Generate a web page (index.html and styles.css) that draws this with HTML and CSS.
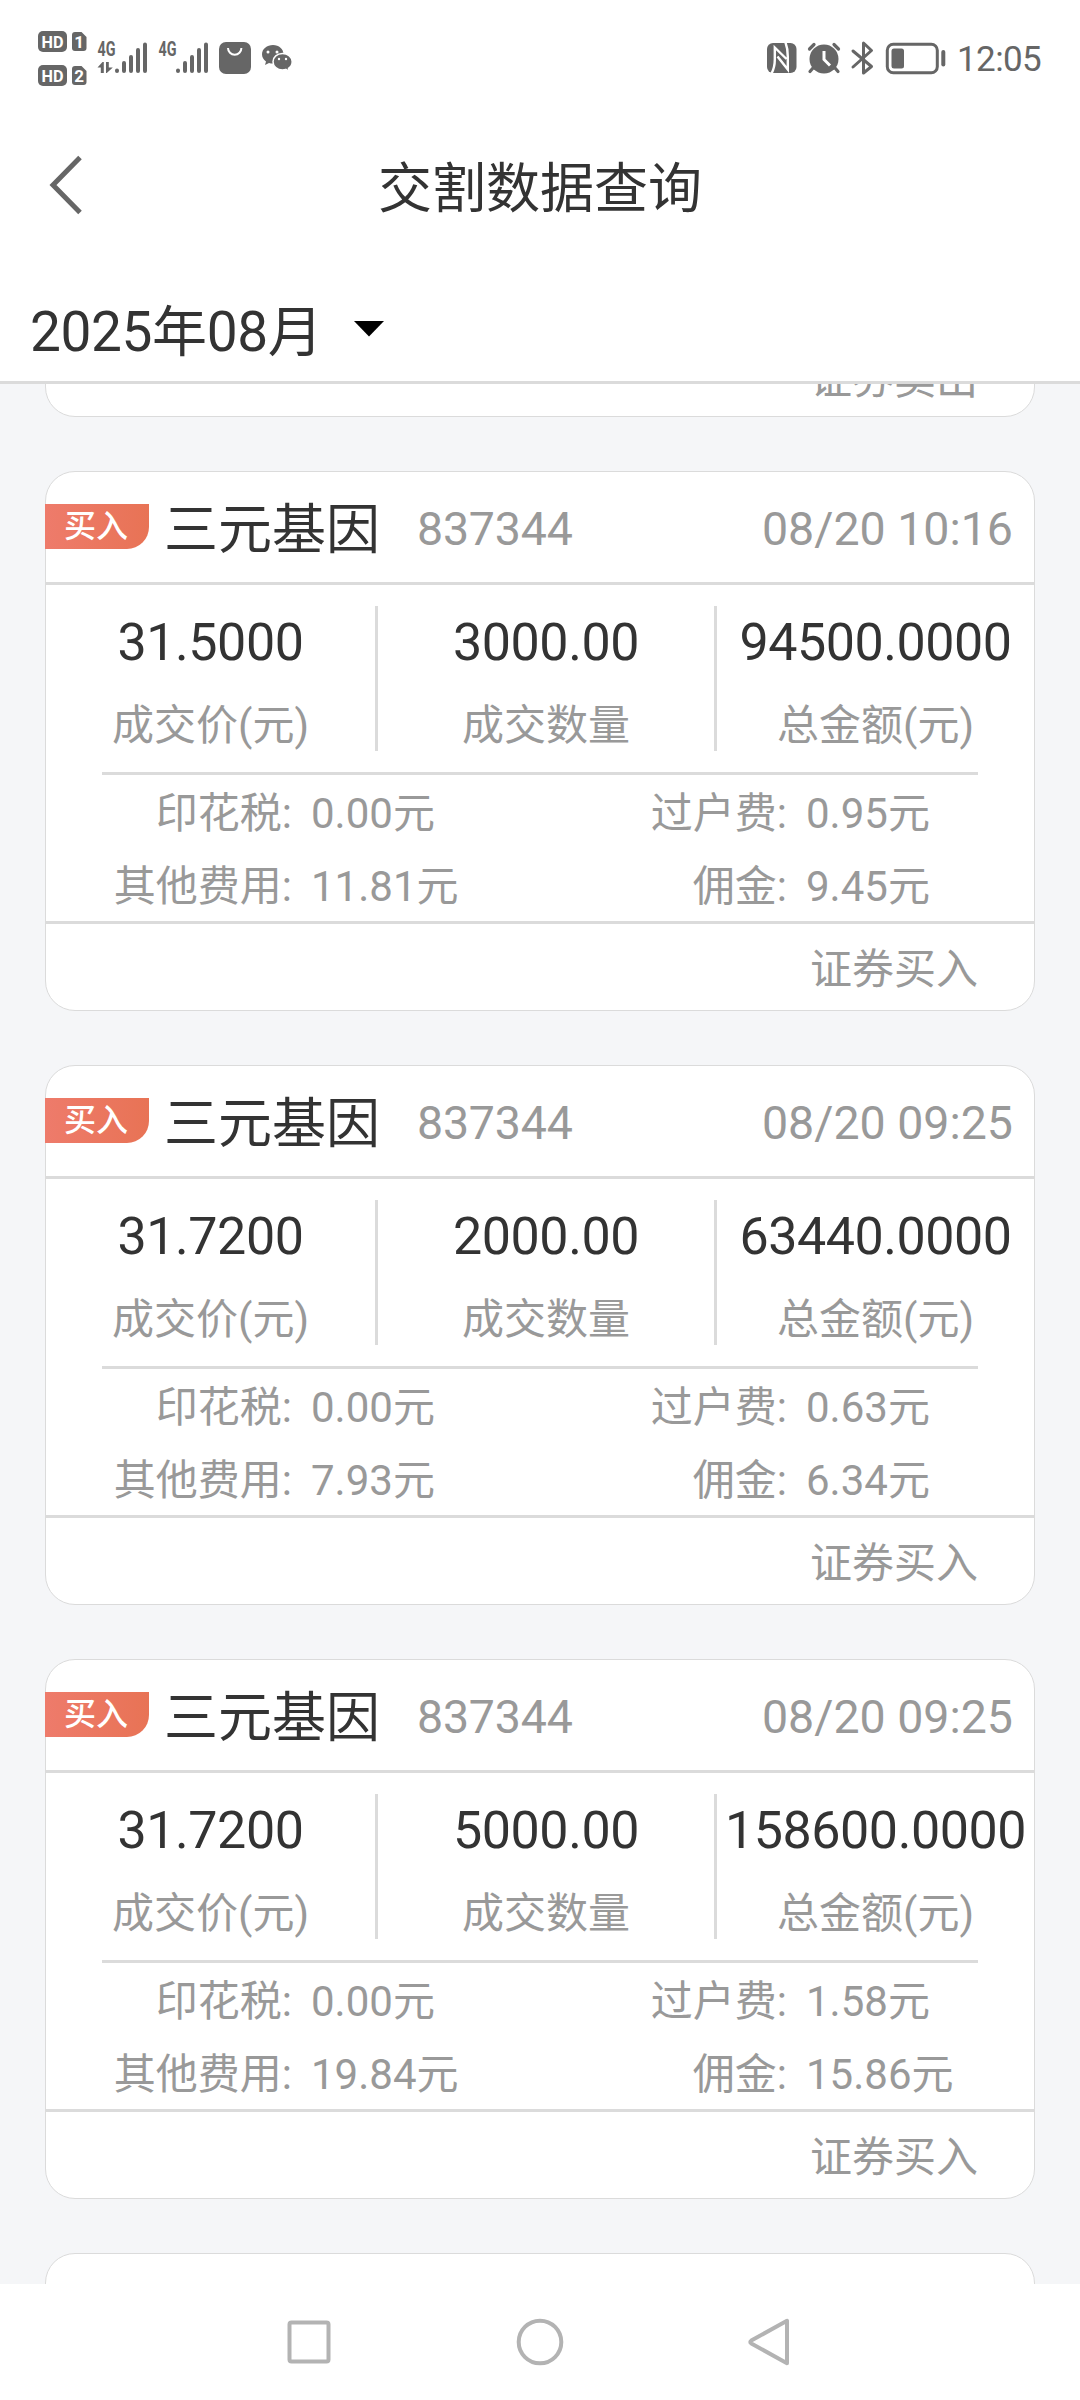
FILE: index.html
```html
<!DOCTYPE html>
<html lang="zh-CN">
<head>
<meta charset="utf-8">
<title>交割数据查询</title>
<link rel="stylesheet" href="styles.css">
</head>
<body>
<div class="screen">
  <div class="status">
    <svg class="status-left" width="260" height="60" viewBox="30 24 260 60" fill="#666">
      <rect x="38" y="31" width="29" height="21" rx="5"/>
      <rect x="38" y="65" width="29" height="21" rx="5"/>
      <path d="M72 35q0-3 3-3h6.500l5 5v11q0 3-3 3h-8.500q-3 0-3-3z"/>
      <path d="M72 69q0-3 3-3h6.500l5 5v11q0 3-3 3h-8.500q-3 0-3-3z"/>
      <g class="chip">
        <text x="41.500" y="47.700" textLength="22" lengthAdjust="spacingAndGlyphs">HD</text>
        <text x="41.500" y="81.700" textLength="22" lengthAdjust="spacingAndGlyphs">HD</text>
        <text x="74.300" y="47.700">1</text>
        <text x="74.300" y="81.700">2</text>
      </g>
      <g class="net">
        <text x="97.500" y="56" textLength="18" lengthAdjust="spacingAndGlyphs">4G</text>
        <text x="158.500" y="56" textLength="18" lengthAdjust="spacingAndGlyphs">4G</text>
      </g>
      <path d="M97.500 67.500l5-5.500h1.300v11h-3v-5.500zM106 62h2.800v5.500h4L106.800 73H106z"/>
      <g stroke="#666" stroke-width="4" stroke-linecap="round">
        <path d="M117 70.500v.500M124 63v8M131 57v14M138 50v21M145 44.500v26.500"/>
        <path d="M178 70.500v.500M185 63v8M192 57v14M199 50v21M206 44.500v26.500"/>
      </g>
      <rect x="219" y="42" width="32" height="32" rx="7"/>
      <path d="M228 48a6.700 6.700 0 0 0 13.400 0" fill="none" stroke="#fff" stroke-width="2"/>
      <path d="M273 45c-6 0-11 4-11 9.300 0 3 1.500 5.500 4 7.200l-1 3.500 4-2c1.300.4 2.600.6 4 .6 6 0 10.500-4 10.500-9.300S279 45 273 45z"/>
      <path d="M282.500 53.500c-5.400 0-9.500 3.600-9.500 8.200s4.100 8.200 9.500 8.200c1.200 0 2.300-.2 3.300-.5l3.700 2-1-3c2.300-1.600 3.700-4 3.700-6.700 0-4.600-4.300-8.200-9.700-8.200z" stroke="#fff" stroke-width="1.500"/>
      <g fill="#fff"><circle cx="268" cy="52" r="1.500"/><circle cx="277" cy="52" r="1.500"/><circle cx="279" cy="59" r="1.200"/><circle cx="286" cy="59" r="1.200"/></g>
    </svg>
    <div class="status-right">
      <svg width="182" height="40" viewBox="764 38 182 40" fill="#666">
        <rect x="767" y="43" width="29.500" height="30" rx="6"/>
        <path d="M771.500 73.500q3.300-6 3.300-14V47.500L786.500 59M785.500 42.500q2.300 6 2.300 14V69.500L777.500 56.500" fill="none" stroke="#fff" stroke-width="2.400"/>
        <circle cx="824" cy="59" r="14.500"/>
        <path d="M824 51v8.500l6 6" fill="none" stroke="#fff" stroke-width="3"/>
        <path d="M809.500 49l4.500-4.500M838.500 49l-4.500-4.500M813 68l-3 3.500M835 68l3 3.500" fill="none" stroke="#666" stroke-width="3.200" stroke-linecap="round"/>
        <path d="M853 51l18.500 15.500-8 6.500V43l8 7.500L853 67" fill="none" stroke="#666" stroke-width="3" stroke-linecap="round" stroke-linejoin="round"/>
        <rect x="887.300" y="44.300" width="50" height="28.500" rx="6" fill="none" stroke="#666" stroke-width="3"/>
        <rect x="891.500" y="48.500" width="12.500" height="20" rx="2.500"/>
        <rect x="941.300" y="50" width="4" height="16.500" rx="2"/>
      </svg>
      <span class="clock">12:05</span>
    </div>
  </div>
  <header class="topbar">
    <svg class="back" width="40" height="64" viewBox="0 0 40 64"><path d="M35 4.500L8 32l27 27.500" fill="none" stroke="#666" stroke-width="5"/></svg>
    <h1 class="title">交割数据查询</h1>
  </header>
  <div class="filter">
    <span class="month">2025年08月</span>
    <svg width="30" height="16" viewBox="0 0 30 16"><path d="M0 0h30L15 15.500z"/></svg>
  </div>
  <main class="list">
    <article class="card card-prev"><footer class="kind">证券卖出</footer></article>

    <article class="card">
      <div class="head"><span class="badge">买入</span><span class="name">三元基因</span><span class="code">837344</span><span class="time">08/20 10:16</span></div>
      <div class="stats">
        <div class="stat"><b>31.5000</b><span>成交价(元)</span></div>
        <div class="stat"><b>3000.00</b><span>成交数量</span></div>
        <div class="stat"><b>94500.0000</b><span>总金额(元)</span></div>
      </div>
      <div class="fees">
        <span class="label">印花税:</span><span class="fee">0.00元</span><span class="label">过户费:</span><span class="fee">0.95元</span>
        <span class="label">其他费用:</span><span class="fee">11.81元</span><span class="label">佣金:</span><span class="fee">9.45元</span>
      </div>
      <footer class="kind">证券买入</footer>
    </article>

    <article class="card">
      <div class="head"><span class="badge">买入</span><span class="name">三元基因</span><span class="code">837344</span><span class="time">08/20 09:25</span></div>
      <div class="stats">
        <div class="stat"><b>31.7200</b><span>成交价(元)</span></div>
        <div class="stat"><b>2000.00</b><span>成交数量</span></div>
        <div class="stat"><b>63440.0000</b><span>总金额(元)</span></div>
      </div>
      <div class="fees">
        <span class="label">印花税:</span><span class="fee">0.00元</span><span class="label">过户费:</span><span class="fee">0.63元</span>
        <span class="label">其他费用:</span><span class="fee">7.93元</span><span class="label">佣金:</span><span class="fee">6.34元</span>
      </div>
      <footer class="kind">证券买入</footer>
    </article>

    <article class="card">
      <div class="head"><span class="badge">买入</span><span class="name">三元基因</span><span class="code">837344</span><span class="time">08/20 09:25</span></div>
      <div class="stats">
        <div class="stat"><b>31.7200</b><span>成交价(元)</span></div>
        <div class="stat"><b>5000.00</b><span>成交数量</span></div>
        <div class="stat"><b>158600.0000</b><span>总金额(元)</span></div>
      </div>
      <div class="fees">
        <span class="label">印花税:</span><span class="fee">0.00元</span><span class="label">过户费:</span><span class="fee">1.58元</span>
        <span class="label">其他费用:</span><span class="fee">19.84元</span><span class="label">佣金:</span><span class="fee">15.86元</span>
      </div>
      <footer class="kind">证券买入</footer>
    </article>

    <article class="card"></article>
  </main>
  <nav class="navbar">
    <svg width="50" height="50" viewBox="0 0 50 50"><rect x="5.500" y="5.500" width="39" height="39" rx="2"/></svg>
    <svg width="50" height="50" viewBox="0 0 50 50"><circle cx="25" cy="25" r="21.300"/></svg>
    <svg width="50" height="50" viewBox="0 0 50 50"><path d="M41 3.800v42.400L5.300 26.500q-2-1.500 0-3z" stroke-linejoin="round"/></svg>
  </nav>
</div>
</body>
</html>
```
FILE: styles.css
```css
* { box-sizing: border-box; }
body {
  margin: 0;
  background: #fff;
  color: #333;
  font-family: Roboto, "Noto Sans CJK SC", sans-serif;
}
.screen {
  width: 1080px;
  height: 2400px;
  display: flex;
  flex-direction: column;
  overflow: hidden;
}
.status {
  height: 117px;
  flex: none;
  display: flex;
  justify-content: space-between;
  align-items: flex-start;
  padding: 24px 38px 0 30px;
}
.status-left { overflow: visible; }
.status-right {
  display: flex;
  align-items: center;
  gap: 11px;
  padding-top: 14px;
  height: 54px;
}
.clock {
  width: 85px;
  padding-top: 4px;
  font-size: 35px;
  line-height: 40px;
  letter-spacing: -0.6px;
  color: #666;
  white-space: nowrap;
}
.chip text { font-size: 17px; font-weight: 700; fill: #fff; }
.net text { font-size: 20px; font-weight: 700; }

.topbar {
  height: 140px;
  flex: none;
  display: grid;
  grid-template-columns: 120px 1fr 120px;
  align-items: center;
}
.back { margin-left: 45px; margin-bottom: 4px; }
.title { margin: 0; padding-top: 6px; text-align: center; font-size: 54px; line-height: 80px; font-weight: 400; }
.filter {
  height: 127px;
  flex: none;
  display: flex;
  align-items: center;
  gap: 32px;
  padding: 20px 0 0 30px;
  border-bottom: 3px solid #dbdbdb;
}
.month { padding-top: 6px; font-size: 55px; line-height: 80px; letter-spacing: -0.4px; white-space: nowrap; }

.list {
  height: 1900px;
  flex: none;
  overflow: hidden;
  display: flex;
  flex-direction: column;
  justify-content: flex-start;
  gap: 54px;
  padding: 0 45px;
  background: #f5f6f8;
}
.card {
  height: 540px;
  flex: none;
  background: #fff;
  border: 1px solid #dbdbdb;
  border-radius: 30px;
}
.card-prev { height: 87px; margin-top: -54px; }
.head {
  height: 113px;
  display: flex;
  align-items: center;
  border-bottom: 3px solid #dbdbdb;
  padding-right: 21px;
}
.badge {
  width: 104px;
  height: 45px;
  margin: -2px 0 0 -1px;
  padding-right: 2px;
  border-radius: 0 0 22px 0;
  background: linear-gradient(90deg, #ee7b6b, #e87355);
  color: #fff;
  font-size: 32px;
  font-weight: 500;
  line-height: 45px;
  text-align: center;
}
.name { margin-left: 15px; padding-top: 7px; font-size: 54px; line-height: 80px; width: 216px; }
.code, .time { padding-top: 4px; font-size: 46.500px; line-height: 60px; color: #999; white-space: nowrap; }
.code { margin-left: 37px; letter-spacing: -0.2px; }
.time { margin-left: auto; }

.stats { height: 187px; display: grid; grid-template-columns: 332px 339px 1fr; padding-top: 21px; }
.stat {
  height: 145px;
  display: flex;
  flex-direction: column;
  align-items: center;
  border-right: 3px solid #dbdbdb;
  padding-top: 1px;
  white-space: nowrap;
}
.stat:last-child { border-right: 0; }
.stat b { font-size: 52px; line-height: 72px; font-weight: 400; letter-spacing: -0.450px; }
.stat span { font-size: 42px; line-height: 62px; color: #999; margin-top: 16px; }

.fees {
  height: 149px;
  margin: 0 56px;
  border-top: 3px solid #dbdbdb;
  display: grid;
  grid-template-columns: 190px 305px 190px 1fr;
  grid-auto-rows: 73px;
  font-size: 42px;
  line-height: 78px;
  color: #999;
  white-space: nowrap;
}
.label { text-align: right; }
.fee { padding-left: 19px; }
.kind {
  height: 89px;
  border-top: 3px solid #dbdbdb;
  padding-right: 56px;
  text-align: right;
  font-size: 42px;
  line-height: 92px;
  color: #999;
}
.navbar { flex: 1; display: flex; align-items: center; justify-content: center; gap: 181px; }
.navbar svg { fill: none; stroke: #b3b3b3; stroke-width: 4; }
```
